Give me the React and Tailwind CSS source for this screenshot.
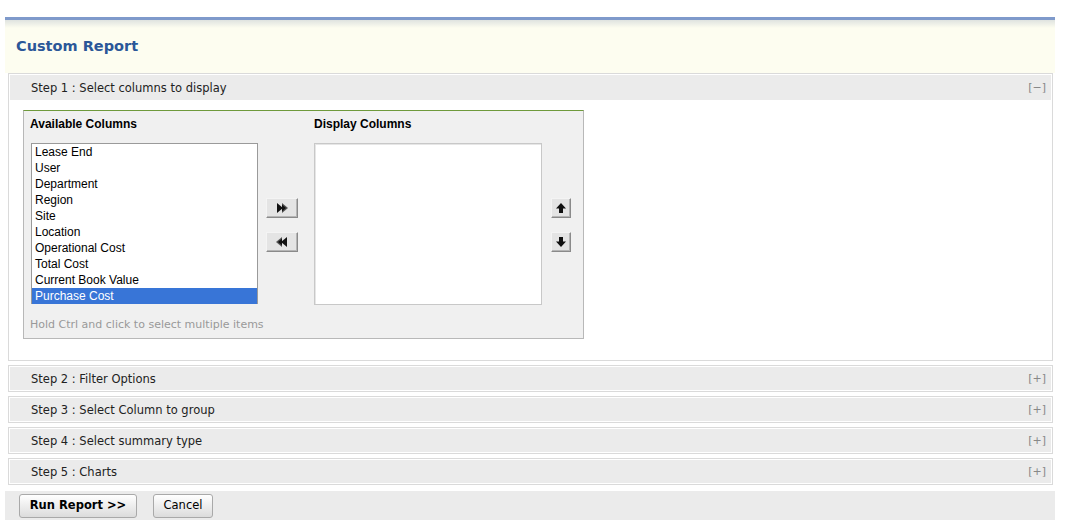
import React from 'react';

const verdana = { fontFamily: '"DejaVu Sans", Verdana, sans-serif' };
const arial = { fontFamily: '"Liberation Sans", Arial, sans-serif' };

const available = [
  'Lease End',
  'User',
  'Department',
  'Region',
  'Site',
  'Location',
  'Operational Cost',
  'Total Cost',
  'Current Book Value',
  'Purchase Cost',
];

function IconButton({ children, wide }) {
  return (
    <button
      className={`flex items-center justify-center h-[20px] ${wide ? 'w-[32px]' : 'w-[20px]'} bg-[#e4e4e4] border border-t-[#f4f4f4] border-l-[#f4f4f4] border-r-[#8a8a8a] border-b-[#8a8a8a] shadow-[inset_-1px_-1px_0_#b5b5b5]`}
    >
      {children}
    </button>
  );
}

function StepRow({ label, sign }) {
  return (
    <div className="border border-[#dadada] p-px bg-white">
      <div className="h-[23px] bg-[#ebebeb] flex items-center justify-between pl-[21px] pr-[5px]">
        <span className="text-[11.5px] text-[#222] pt-[3px]" style={verdana}>{label}</span>
        <span className="text-[11px] text-[#888] pt-[2px]" style={verdana}>{sign}</span>
      </div>
    </div>
  );
}

export default function App() {
  return (
    <div className="bg-white w-[1081px] h-[531px] pt-[17px]">
      <div className="ml-[5px] w-[1050px]">
        {/* Header */}
        <div className="border-t-[3px] border-[#7f9acb] h-[56px] bg-gradient-to-b from-[#dfe3e0] via-[#fdfdf0] via-[15%] to-[#fdfdf0] flex items-center pl-[11px]">
          <h1 className="text-[14.5px] font-bold text-[#2b5798]" style={verdana}>Custom Report</h1>
        </div>

        {/* Step 1 */}
        <div className="ml-[3px] w-[1045px] border border-[#dadada] p-px bg-white">
          <div className="h-[25px] bg-[#ebebeb] flex items-center justify-between pl-[21px] pr-[5px]">
            <span className="text-[11.5px] text-[#222] pt-[3px]" style={verdana}>Step 1 : Select columns to display</span>
            <span className="text-[11px] text-[#888] pt-[2px]" style={verdana}>[−]</span>
          </div>
          <div className="pl-[13px] pt-[10px] pb-[20px]">
            <div className="w-[561px] h-[229px] bg-[#f0f0f0] border border-[#b8b8b8] border-t-[#6f9a3c] pl-[6px] pt-[5px]" style={arial}>
              <div className="flex">
                {/* Available */}
                <div className="w-[228px]">
                  <div className="h-[27px] leading-[16px] text-[12px] font-bold text-black">Available Columns</div>
                  <div className="w-[227px] h-[161px] bg-white border border-[#9a9a9a] ml-px">
                    {available.map((item) => (
                      <div
                        key={item}
                        className={`h-[16px] leading-[16px] text-[12px] pl-[3px] ${item === 'Purchase Cost' ? 'bg-[#3875d7] text-white' : 'text-black'}`}
                      >
                        {item}
                      </div>
                    ))}
                  </div>
                  <div className="mt-[13px] text-[11px] text-[#999] whitespace-nowrap" style={verdana}>
                    Hold Ctrl and click to select multiple items
                  </div>
                </div>

                {/* Move buttons */}
                <div className="ml-[8px] pt-[82px] flex flex-col gap-[14px]">
                  <IconButton wide>
                    <svg width="16" height="12" viewBox="0 0 16 12">
                      <path d="M3 1 L9 6 L3 11 Z" fill="#111" />
                      <path d="M8 1 L14 6 L8 11 Z" fill="#555" />
                      <path d="M8 2.5 L12 6 L8 9.5 Z" fill="#111" />
                    </svg>
                  </IconButton>
                  <IconButton wide>
                    <svg width="16" height="12" viewBox="0 0 16 12">
                      <path d="M8 1 L2 6 L8 11 Z" fill="#555" />
                      <path d="M8 2.5 L4 6 L8 9.5 Z" fill="#111" />
                      <path d="M13 1 L7 6 L13 11 Z" fill="#111" />
                    </svg>
                  </IconButton>
                </div>

                {/* Display */}
                <div className="ml-[16px] w-[228px]">
                  <div className="h-[27px] leading-[16px] text-[12px] font-bold text-black">Display Columns</div>
                  <div className="w-[228px] h-[162px] bg-white border border-[#c8c8c8] shadow-[inset_1px_1px_0_#e6e6e6]" />
                </div>

                {/* Order buttons */}
                <div className="ml-[9px] pt-[82px] flex flex-col gap-[14px]">
                  <IconButton>
                    <svg width="12" height="12" viewBox="0 0 12 12">
                      <path d="M6 1 L11 6.5 L8 6.5 L8 11 L4 11 L4 6.5 L1 6.5 Z" fill="#111" />
                    </svg>
                  </IconButton>
                  <IconButton>
                    <svg width="12" height="12" viewBox="0 0 12 12">
                      <path d="M6 11 L11 5.5 L8 5.5 L8 1 L4 1 L4 5.5 L1 5.5 Z" fill="#111" />
                    </svg>
                  </IconButton>
                </div>
              </div>
            </div>
          </div>
        </div>

        {/* Steps 2-5 */}
        <div className="ml-[3px] w-[1045px] mt-[4px] flex flex-col gap-[4px]">
          <StepRow label="Step 2 : Filter Options" sign="[+]" />
          <StepRow label="Step 3 : Select Column to group" sign="[+]" />
          <StepRow label="Step 4 : Select summary type" sign="[+]" />
          <StepRow label="Step 5 : Charts" sign="[+]" />
        </div>

        {/* Footer */}
        <div className="mt-[6px] h-[29px] bg-[#ebebeb] flex items-center pl-[14px] gap-[16px]">
          <button
            className="h-[24px] w-[118px] rounded-[3px] border border-[#a9a9a9] bg-gradient-to-b from-white to-[#dcdcdc] text-[11.5px] font-bold text-black"
            style={verdana}
          >
            Run Report &gt;&gt;
          </button>
          <button
            className="h-[24px] w-[60px] rounded-[3px] border border-[#a9a9a9] bg-gradient-to-b from-white to-[#dcdcdc] text-[11.5px] text-black"
            style={verdana}
          >
            Cancel
          </button>
        </div>
      </div>
    </div>
  );
}
